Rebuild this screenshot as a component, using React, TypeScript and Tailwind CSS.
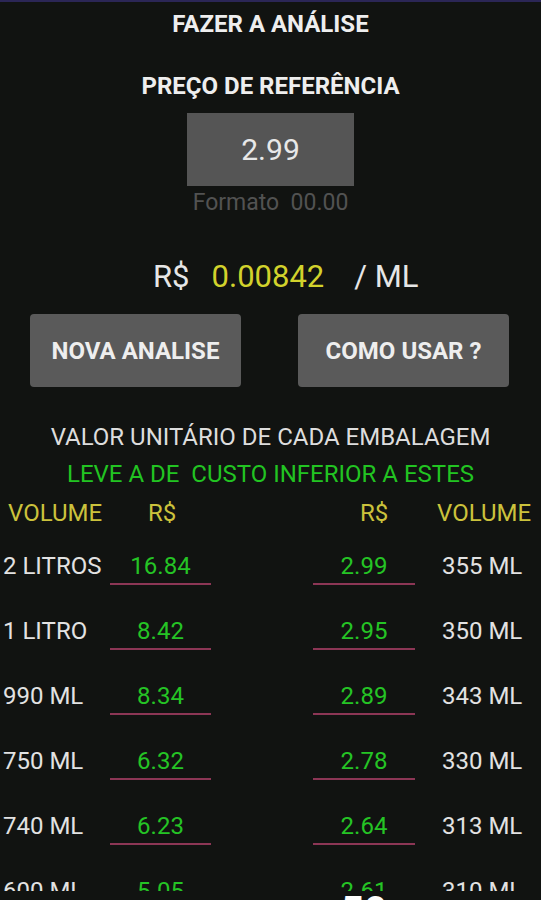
import React from 'react';

const rows = [
  { leftVol: '2 LITROS', leftPrice: '16.84', rightPrice: '2.99', rightVol: '355 ML' },
  { leftVol: '1 LITRO', leftPrice: '8.42', rightPrice: '2.95', rightVol: '350 ML' },
  { leftVol: '990 ML', leftPrice: '8.34', rightPrice: '2.89', rightVol: '343 ML' },
  { leftVol: '750 ML', leftPrice: '6.32', rightPrice: '2.78', rightVol: '330 ML' },
  { leftVol: '740 ML', leftPrice: '6.23', rightPrice: '2.64', rightVol: '313 ML' },
  { leftVol: '600 ML', leftPrice: '5.05', rightPrice: '2.61', rightVol: '310 ML' },
];

const PriceCell = ({ value }: { value: string }) => (
  <div className="flex flex-col">
    <div className="text-center text-[24px] leading-[28px] text-[#25c425]">{value}</div>
    <div className="mt-[3px] h-[2px] bg-[#8c3655]" />
  </div>
);

export default function App() {
  return (
    <div className="relative h-[900px] w-full overflow-hidden bg-[#111311] font-['Roboto','Liberation_Sans',sans-serif]">
      <div className="h-[2px] bg-[#2b2656]" />

      <h1 className="mt-[8px] text-center text-[24px] font-bold leading-[28px] text-[#eeeeee]">FAZER A ANÁLISE</h1>

      <h2 className="mt-[34px] text-center text-[24px] font-bold leading-[28px] text-[#eeeeee]">PREÇO DE REFERÊNCIA</h2>

      {/* campo de preço */}
      <div className="mx-auto mt-[13px] flex h-[73px] w-[167px] items-center justify-center bg-[#555555] text-[30px] text-[#e8e8e8]">
        2.99
      </div>
      <div className="mt-[5px] whitespace-pre text-center text-[23px] leading-[24px] text-[#525252]">Formato  00.00</div>

      <div className="mt-[44px] flex items-center pl-[153px] text-[31px] leading-[36px]">
        <span className="text-[#e6e6e6]">R$</span>
        <span className="ml-[22px] text-[#d2d22c]">0.00842</span>
        <span className="ml-[30px] text-[#e6e6e6]">/ ML</span>
      </div>

      <div className="mt-[19px] flex gap-[57px] pl-[30px]">
        <button className="h-[73px] w-[211px] rounded-[4px] bg-[#5a5a5a] text-[24px] font-bold text-[#eeeeee]">NOVA ANALISE</button>
        <button className="h-[73px] w-[211px] rounded-[4px] bg-[#5a5a5a] text-[24px] font-bold text-[#eeeeee]">COMO USAR ?</button>
      </div>

      <p className="mt-[36px] text-center text-[24px] leading-[28px] text-[#dddddd]">VALOR UNITÁRIO DE CADA EMBALAGEM</p>
      <p className="mt-[9px] whitespace-pre text-center text-[24px] leading-[28px] text-[#22c422]">LEVE A DE  CUSTO INFERIOR A ESTES</p>

      {/* cabeçalho da tabela */}
      <div className="mt-[11px] grid grid-cols-[110px_101px_102px_102px_1fr] text-[24px] leading-[28px] text-[#cbc23c]">
        <div className="pl-[8px]">VOLUME</div>
        <div className="pl-[38px]">R$</div>
        <div />
        <div className="pl-[47px]">R$</div>
        <div className="pl-[22px]">VOLUME</div>
      </div>

      <div className="h-[364px] overflow-hidden">
        {rows.map((r) => (
          <div key={r.leftVol} className="mt-[25px] grid h-[40px] grid-cols-[110px_101px_102px_102px_1fr] text-[24px] leading-[28px]">
            <div className="pl-[3px] text-[#e2e2e2]">{r.leftVol}</div>
            <PriceCell value={r.leftPrice} />
            <div />
            <PriceCell value={r.rightPrice} />
            <div className="pl-[27px] text-[#e2e2e2]">{r.rightVol}</div>
          </div>
        ))}
      </div>

      <div className="absolute left-[341px] top-[892px] text-[40px] font-bold leading-none text-white">50</div>
    </div>
  );
}
